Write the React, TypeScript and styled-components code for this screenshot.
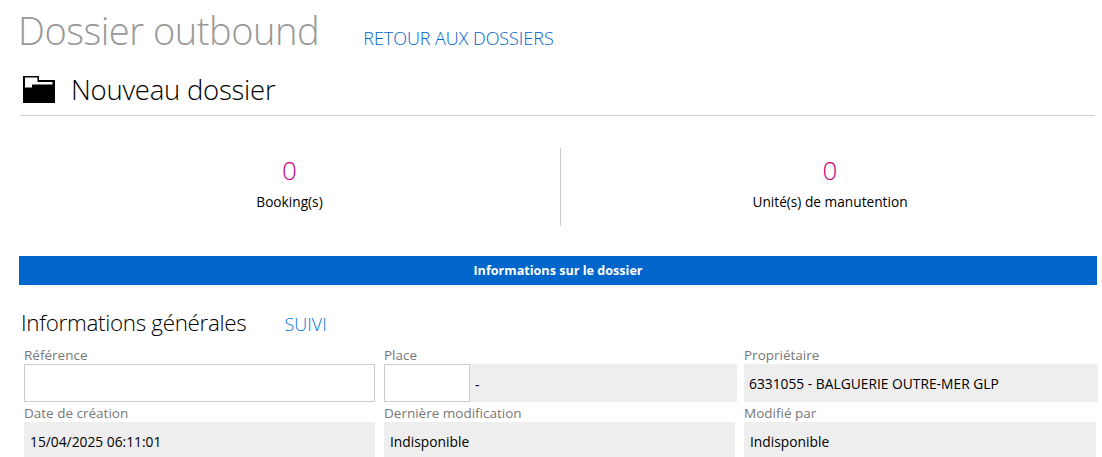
import React from "react";
import styled, { createGlobalStyle } from "styled-components";

const Global = createGlobalStyle`
  html, body { margin: 0; padding: 0; background: #fff; }
  body { font-family: "Open Sans", "Noto Sans", "Liberation Sans", sans-serif; color: #000; overflow: hidden; }
`;

const Page = styled.div`
  width: 1102px;
  height: 457px;
  overflow: hidden;
  padding: 0 5px 0 19px;
  box-sizing: border-box;
`;

const TitleRow = styled.div`
  display: flex;
  align-items: baseline;
  height: 62px;
  padding-top: 5px;
  box-sizing: border-box;
`;

const Title = styled.h1`
  margin: 0 0 0 -1px;
  font-size: 38px;
  line-height: 50px;
  font-weight: 300;
  color: #999;
  letter-spacing: -0.45px;
`;

const BackLink = styled.a`
  margin-left: 44px;
  font-size: 18px;
  font-weight: 300;
  color: #0066cc;
  letter-spacing: -0.05px;
`;

const DossierRow = styled.div`
  display: flex;
  align-items: center;
  height: 54px;
  margin-left: 1px;
  margin-right: 2px;
  padding-left: 3px;
  box-sizing: border-box;
  border-bottom: 1px solid #ccc;
`;

const FolderIcon = styled.svg`
  width: 32px;
  height: 27px;
  margin: 1px 16px 0 0;
  flex: none;
`;

const DossierTitle = styled.h2`
  margin: 2px 0 0 0;
  font-size: 27.5px;
  line-height: 36px;
  font-weight: 300;
  letter-spacing: -0.24px;
`;

const Stats = styled.div`
  display: flex;
  height: 78px;
  margin-top: 32px;
  width: 1080px;
`;

const Stat = styled.div<{ $divided?: boolean }>`
  flex: 0 0 ${(p) => (p.$divided ? 542 : 538)}px;
  text-align: center;
  box-sizing: border-box;
  padding-top: 4px;
  ${(p) => (p.$divided ? "border-right: 1px solid #ccc;" : "")}
`;

const StatValue = styled.div`
  font-size: 26px;
  line-height: 36px;
  font-weight: 300;
  color: #c8007f;
`;

const StatLabel = styled.div`
  font-size: 13.7px;
  line-height: 18px;
  margin-top: 5px;
`;

const Banner = styled.div`
  width: 1078px;
  height: 29px;
  margin-top: 30px;
  background: #0066cc;
  color: #fff;
  font-size: 12.6px;
  font-weight: 700;
  line-height: 29px;
  text-align: center;
`;

const SectionRow = styled.div`
  display: flex;
  align-items: baseline;
  height: 36px;
  padding: 23px 0 0 2px;
`;

const SectionTitle = styled.h3`
  margin: 0;
  font-size: 22.4px;
  line-height: 30px;
  font-weight: 300;
  letter-spacing: -0.3px;
`;

const SectionLink = styled.a`
  margin-left: 38px;
  font-size: 18px;
  font-weight: 300;
  color: #0078d7;
`;

const Grid = styled.div`
  display: grid;
  grid-template-columns: 351px 351px 352px;
  column-gap: 9px;
  margin-left: 5px;
`;

const Field = styled.div`
  display: flex;
  flex-direction: column;
`;

const Label = styled.label`
  font-size: 13.5px;
  line-height: 22px;
  height: 20px;
  color: #777;
`;

const Value = styled.div<{ $wide?: boolean }>`
  height: 38px;
  line-height: 40px;
  background: #eee;
  font-size: 13.8px;
  padding-left: ${(p) => (p.$wide ? 5 : 6)}px;
  ${(p) => (p.$wide ? "margin-right: -2px;" : "")}
`;

const Input = styled.div`
  height: 38px;
  box-sizing: border-box;
  border: 1px solid #ccc;
  background: #fff;
`;

const PlaceWrap = styled.div`
  display: flex;
  height: 38px;
  background: #eee;
  margin-right: -2px;
`;

const PlaceInput = styled(Input)`
  width: 86px;
`;

const PlaceDash = styled.span`
  font-size: 13.8px;
  line-height: 42px;
  margin-left: 5px;
`;

export default function App() {
  return (
    <Page>
      <Global />
      <TitleRow>
        <Title>Dossier outbound</Title>
        <BackLink>RETOUR AUX DOSSIERS</BackLink>
      </TitleRow>
      <DossierRow>
        <FolderIcon viewBox="0 0 32 27">
          <path d="M0 0h16v4h16v23H0z" fill="#000" />
          <path d="M2 1.5h12.5v4.5h15v2.5H9v3H2z" fill="#fff" />
        </FolderIcon>
        <DossierTitle>Nouveau dossier</DossierTitle>
      </DossierRow>
      <Stats>
        <Stat $divided>
          <StatValue>0</StatValue>
          <StatLabel>Booking(s)</StatLabel>
        </Stat>
        <Stat>
          <StatValue>0</StatValue>
          <StatLabel>Unité(s) de manutention</StatLabel>
        </Stat>
      </Stats>
      <Banner>Informations sur le dossier</Banner>
      <SectionRow>
        <SectionTitle>Informations générales</SectionTitle>
        <SectionLink>SUIVI</SectionLink>
      </SectionRow>
      <Grid>
        <Field>
          <Label>Référence</Label>
          <Input />
        </Field>
        <Field>
          <Label>Place</Label>
          <PlaceWrap>
            <PlaceInput />
            <PlaceDash>-</PlaceDash>
          </PlaceWrap>
        </Field>
        <Field>
          <Label>Propriétaire</Label>
          <Value $wide>6331055 - BALGUERIE OUTRE-MER GLP</Value>
        </Field>
        <Field>
          <Label>Date de création</Label>
          <Value>15/04/2025 06:11:01</Value>
        </Field>
        <Field>
          <Label>Dernière modification</Label>
          <Value>Indisponible</Value>
        </Field>
        <Field>
          <Label>Modifié par</Label>
          <Value>Indisponible</Value>
        </Field>
      </Grid>
    </Page>
  );
}
